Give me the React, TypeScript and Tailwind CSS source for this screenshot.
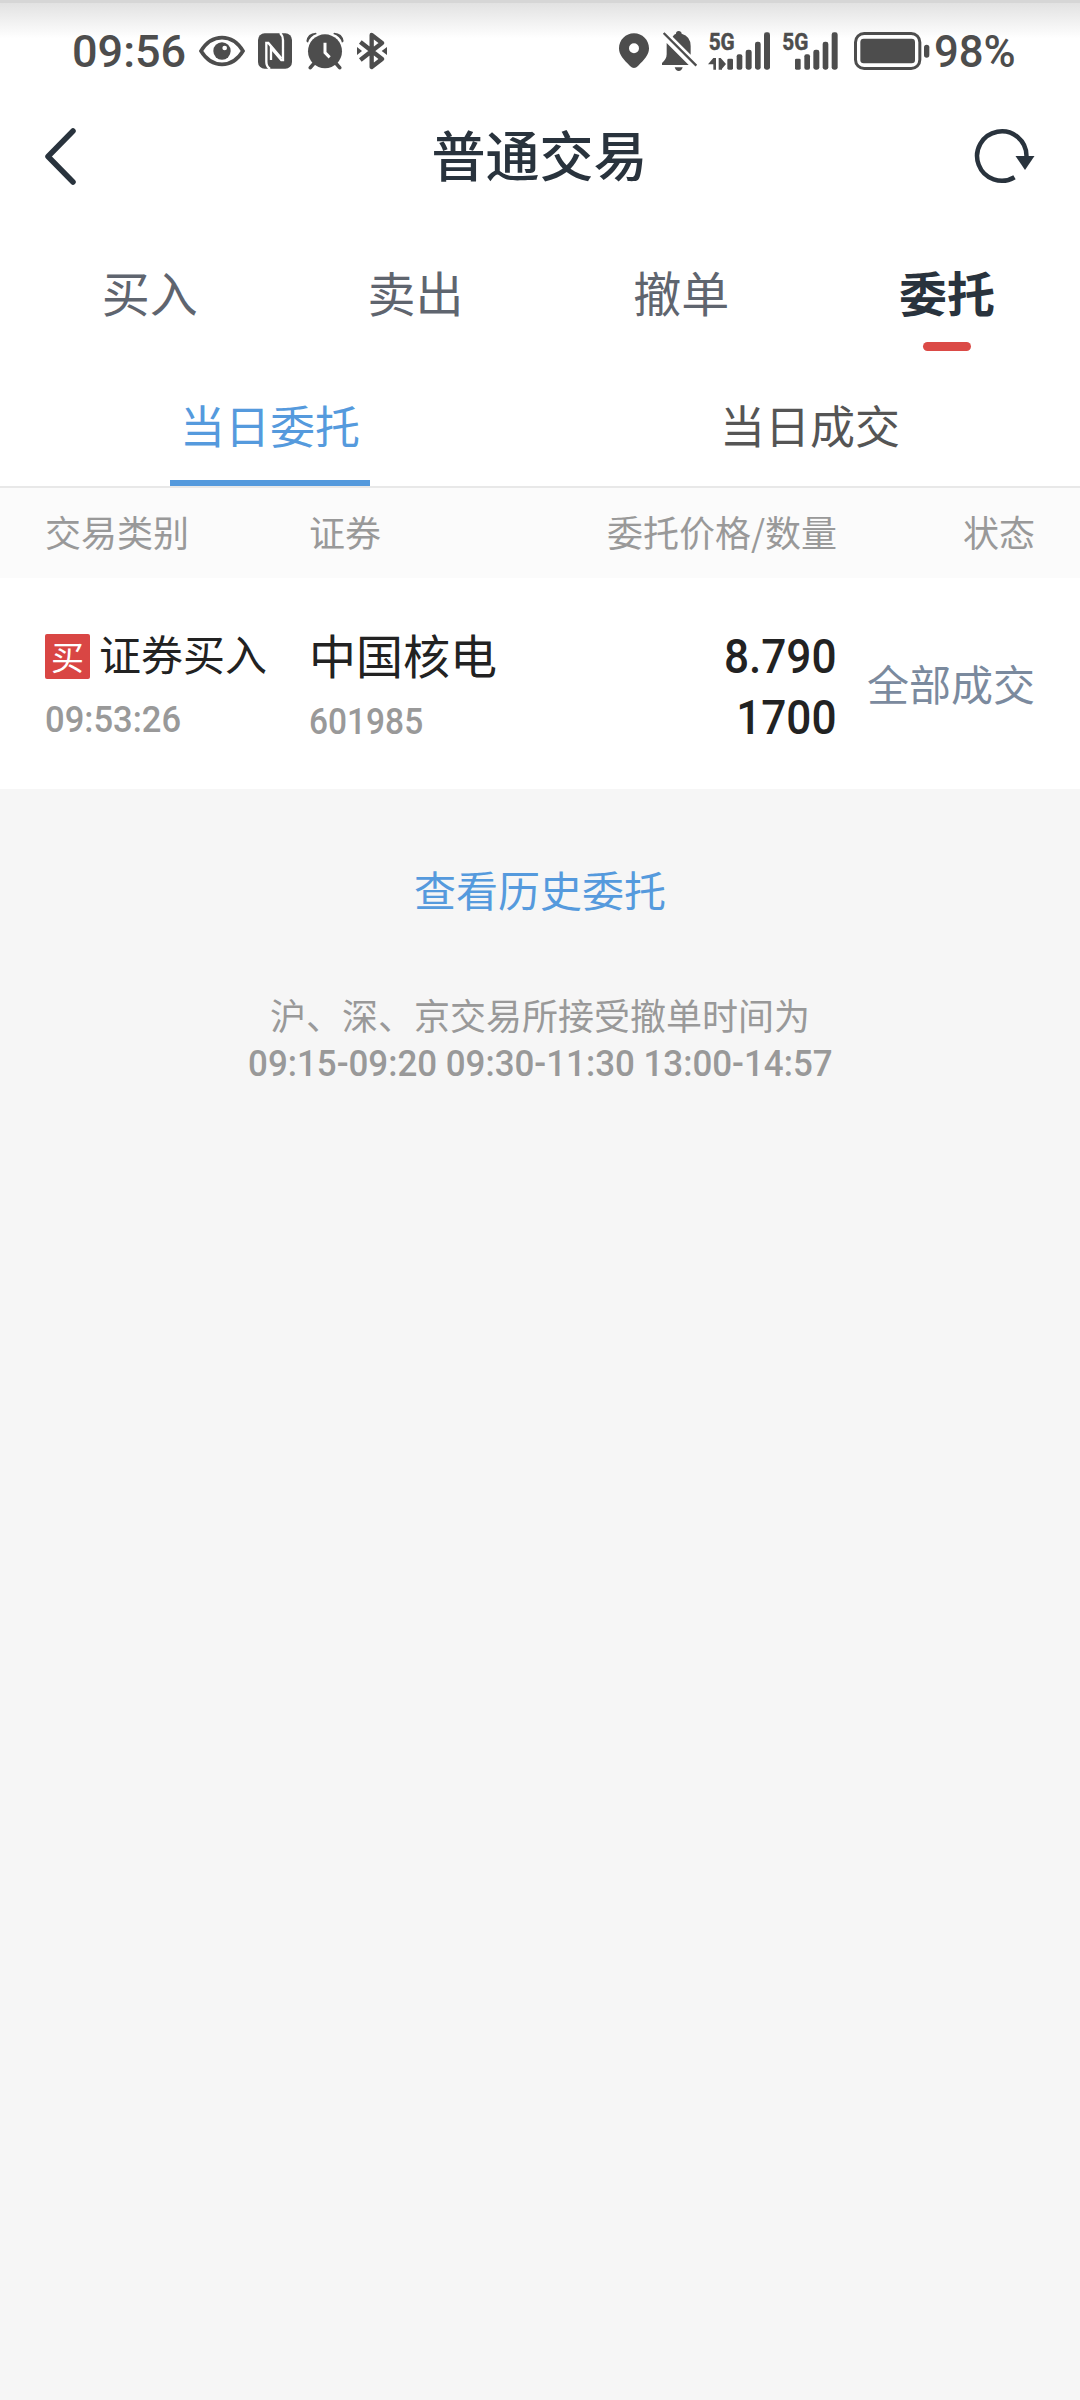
import React from 'react';

import clsx from 'clsx';

const tabs = ['买入', '卖出', '撤单', '委托'];
const subTabs = ['当日委托', '当日成交'];

function EyeIcon() {
  return (
    <svg width="46" height="32" viewBox="0 0 138 96" fill="none">
      <path d="M6 48C22 22 44 8 69 8s47 14 63 40C116 74 94 88 69 88S22 74 6 48Z" stroke="#4d4d4d" strokeWidth="11" />
      <circle cx="69" cy="48" r="26" fill="#4d4d4d" />
      <circle cx="77" cy="39" r="7" fill="#fff" />
    </svg>
  );
}

function NfcIcon() {
  return (
    <svg width="34" height="36" viewBox="0 0 102 108" fill="none">
      <rect x="0" y="1" width="102" height="106" rx="20" fill="#4d4d4d" />
      <path d="M36 108q-11-8-11-22V30h6l39 46" stroke="#fff" strokeWidth="7" />
      <path d="M66 0q9 8 9 22v59h-5L39 45v36" stroke="#fff" strokeWidth="7" />
    </svg>
  );
}

function AlarmIcon() {
  return (
    <svg width="38" height="38" viewBox="0 0 114 114" fill="none">
      <path d="M1 28Q4 3 30 2l2 4Q12 12 6 32ZM113 28Q110 3 84 2l-2 4q20 6 26 26Z" fill="#4d4d4d" />
      <path d="M26 92L13 107M88 92l13 15" stroke="#4d4d4d" strokeWidth="11" strokeLinecap="round" />
      <circle cx="57" cy="58" r="51" fill="#4d4d4d" />
      <path d="M57 32v30l14 14" stroke="#fff" strokeWidth="9" />
    </svg>
  );
}

function BluetoothIcon() {
  return (
    <svg width="30" height="38" viewBox="0 0 90 114" fill="none" stroke="#4d4d4d" strokeWidth="13" strokeLinejoin="round">
      <path d="M10 30l65 51-31 24V9l31 24L10 84" />
      <path d="M0 45l15 12L0 69ZM90 45L74 57l16 12Z" fill="#4d4d4d" stroke="none" />
    </svg>
  );
}

function PinIcon() {
  return (
    <svg width="30" height="36" viewBox="0 0 90 108">
      <path
        d="M45 1C20 1 0 21 0 46c0 20 14 34 33 53q12 12 24 0c19-19 33-33 33-53C90 21 70 1 45 1Zm0 30a15 15 0 1 1 0 30 15 15 0 0 1 0-30Z"
        fill="#4d4d4d"
        fillRule="evenodd"
      />
    </svg>
  );
}

function MuteIcon() {
  return (
    <svg width="36" height="40" viewBox="0 0 108 120">
      <path d="M50 0q8 0 9 8 27 8 27 37v26L32 17q4-8 10-9 0-8 8-8Z" fill="#4d4d4d" />
      <path d="M14 36l66 66H0v-6q14-12 14-26Z" fill="#4d4d4d" />
      <path d="M38 109h24q-3 11-12 11t-12-11Z" fill="#4d4d4d" />
      <path d="M5 6l98 98" stroke="#4d4d4d" strokeWidth="7" />
    </svg>
  );
}

function Signal({ data }: { data?: boolean }) {
  return (
    <svg
      className="overflow-visible"
      width={data ? 64 : 58}
      height="38"
      viewBox={data ? '0 0 192 114' : '19 0 174 114'}
    >
      <text
        x={data ? 2 : 20}
        y="55"
        fontSize="74"
        fontWeight="700"
        fontFamily="Roboto, sans-serif"
        textLength="78"
        lengthAdjust="spacingAndGlyphs"
        fill="#4d4d4d"
        stroke="#4d4d4d"
        strokeWidth="1.500"
      >
        5G
      </text>
      <g fill="#4d4d4d">
        {data && <path d="M0 97l16-19h8v35h-8V97ZM32 78h6l16 18-12 14v3H32Z" />}
        <rect x="58" y="80" width="17" height="33" rx="4" />
        <rect x="86" y="67" width="17" height="46" rx="6" />
        <rect x="113" y="53" width="18" height="60" rx="7" />
        <rect x="141" y="29" width="17" height="84" rx="7" />
        <rect x="168" y="1" width="18" height="112" rx="7" />
      </g>
    </svg>
  );
}

function BatteryIcon() {
  return (
    <svg width="76" height="38" viewBox="0 0 228 114">
      <rect x="4.500" y="4.500" width="193" height="105" rx="26" fill="none" stroke="#4d4d4d" strokeWidth="9" />
      <rect x="19" y="20" width="164" height="74" rx="10" fill="#4d4d4d" />
      <rect x="210" y="38" width="16" height="39" rx="8" fill="#4d4d4d" />
    </svg>
  );
}

function StatusBar() {
  return (
    <div className="h-26 border-t-3 border-[#d6d6d6] bg-linear-to-b from-[#e2e2e2] to-white to-35% font-[Roboto] text-[45px] leading-none font-medium text-[#4d4d4d]">
      <div className="flex h-24 items-center pl-[72px]">
        <span className="w-[127px]">09:56</span>
        <EyeIcon />
        <span className="w-[13px]" />
        <NfcIcon />
        <span className="w-[14px]" />
        <AlarmIcon />
        <span className="w-[13px]" />
        <BluetoothIcon />
        <span className="w-[232px]" />
        <PinIcon />
        <span className="w-[13px]" />
        <MuteIcon />
        <span className="w-[10px]" />
        <Signal data />
        <span className="w-[10px]" />
        <Signal />
        <span className="w-[14px]" />
        <BatteryIcon />
        <span className="ml-[4px] origin-left scale-x-97">98%</span>
      </div>
    </div>
  );
}

function Header() {
  return (
    <div className="flex h-26 items-center justify-between pr-[45px] pl-[44px] text-[#29333d]">
      <svg width="62" height="58" viewBox="0 0 62 58" fill="none" stroke="currentColor" strokeWidth="5.500">
        <path d="M29 4L4 29.500 29 55" strokeLinecap="round" strokeLinejoin="round" />
      </svg>
      <h1 className="pb-1 text-[54px] leading-none font-medium">普通交易</h1>
      <svg width="62" height="58" viewBox="0 0 62 58" fill="none">
        <path d="M41.500 50.200A24.700 24.700 0 1 1 53.500 29" stroke="currentColor" strokeWidth="4.500" />
        <path d="M42.500 29h19L52 43Z" fill="currentColor" />
      </svg>
    </div>
  );
}

function Tabs() {
  return (
    <div className="grid h-[158px] grid-cols-4 pl-[17px]">
      {tabs.map((name) => {
        const active = name === '委托';
        return (
          <div key={name} className="flex flex-col items-center pt-[59px]">
            <span
              className={clsx('text-[48px] leading-none', active ? 'font-bold text-[#29333d]' : 'text-[#5f656f]')}
            >
              {name}
            </span>
            {active && <span className="mt-[27px] h-[9px] w-12 rounded-full bg-[#db4a46]" />}
          </div>
        );
      })}
    </div>
  );
}

function SubTabs() {
  return (
    <div className="grid h-[122px] grid-cols-2 border-b-2 border-[#e8e8e8]">
      {subTabs.map((name, i) => (
        <div key={name} className="flex flex-col items-center justify-between pt-[36px] text-[45px] leading-none">
          <span className={i === 0 ? 'text-[#559add]' : 'text-[#555]'}>{name}</span>
          {i === 0 && <span className="h-1.5 w-[200px] bg-[#559add]" />}
        </div>
      ))}
    </div>
  );
}

function Orders() {
  return (
    <>
      <div className="flex h-[90px] items-center bg-[#fbfbfb] px-[45px] pb-1 text-[36px] leading-none text-[#999]">
        <span className="w-[264px]">交易类别</span>
        <span>证券</span>
        <span className="ml-auto">委托价格/数量</span>
        <span className="w-[198px] text-right">状态</span>
      </div>
      <div className="flex h-[211px] bg-white px-[45px] pt-[51px] text-[#222]">
        <div className="w-[264px]">
          <div className="flex h-[48px] items-center text-[42px] leading-none">
            <span className="mt-[7px] mr-[9px] flex size-[45px] items-center justify-center rounded-xs bg-[#d94644] text-[33px] text-white">
              买
            </span>
            <span>证券买入</span>
          </div>
          <div className="mt-[25px] w-fit origin-left scale-x-96 font-[Roboto] text-[36px] leading-none font-medium text-[#999]">
            09:53:26
          </div>
        </div>
        <div>
          <div className="pt-px text-[47px] leading-[48px]">中国核电</div>
          <div className="mt-[26px] w-fit origin-left scale-x-93 font-[Roboto] text-[36px] leading-none font-medium text-[#999]">
            601985
          </div>
        </div>
        <div className="ml-auto origin-right scale-x-92 pr-px text-right font-[Roboto] text-[48px] leading-[61px] font-medium">
          <div className="-mt-[3px]">8.790</div>
          <div>1700</div>
        </div>
        <div className="w-[198px] pt-[33px] text-right text-[42px] leading-none text-[#7b8a9e]">全部成交</div>
      </div>
    </>
  );
}

export default function App() {
  return (
    <div className="h-[2400px] w-[1080px] bg-[#f6f6f6] font-['Noto_Sans_CJK_SC',sans-serif]">
      <div className="bg-white">
        <StatusBar />
        <Header />
        <Tabs />
        <SubTabs />
        <Orders />
      </div>
      <div className="flex flex-col items-center text-[36px] leading-[48px] text-[#999]">
        <a className="mt-[76px] text-[42px] text-[#559add]">查看历史委托</a>
        <p className="mt-[77px]">沪、深、京交易所接受撤单时间为</p>
        <p className="mt-[2px] scale-x-97 font-[Roboto] font-medium">09:15-09:20 09:30-11:30 13:00-14:57</p>
      </div>
    </div>
  );
}
